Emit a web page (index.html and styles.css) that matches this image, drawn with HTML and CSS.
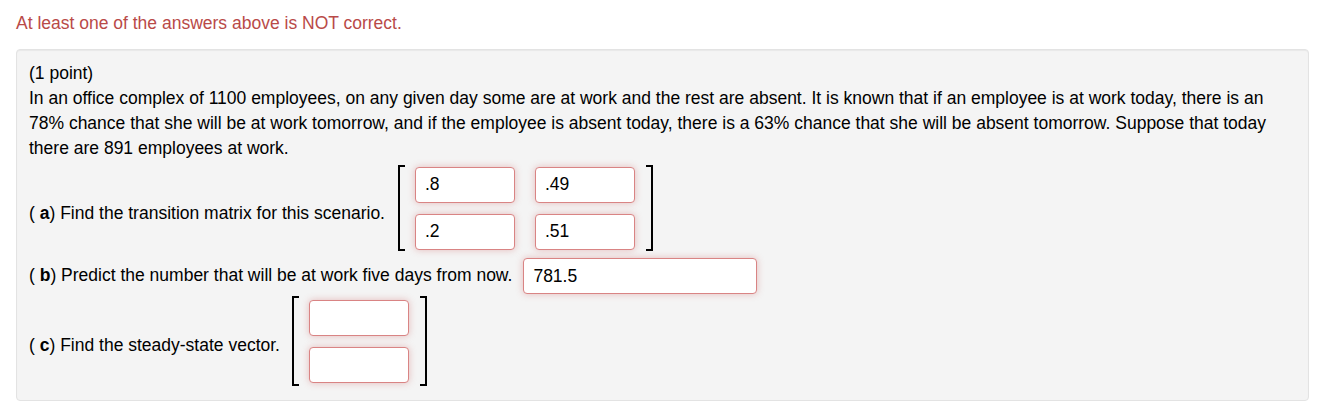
FILE: index.html
```html
<!DOCTYPE html>
<html>
<head>
<meta charset="utf-8">
<link rel="stylesheet" href="styles.css">
</head>
<body>
<div class="page">
  <div class="message">At least one of the answers above is NOT correct.</div>
  <div class="problem">
    <div class="points">(1 point)</div>
    <p class="statement">In an office complex of 1100 employees, on any given day some are at work and the rest are absent. It is known that if an employee is at work today, there is an 78% chance that she will be at work tomorrow, and if the employee is absent today, there is a 63% chance that she will be absent tomorrow. Suppose that today there are 891 employees at work.</p>

    <div class="part part-a">
      <span class="label">( <b>a</b>) Find the transition matrix for this scenario.</span>
      <div class="matrix">
        <span class="bracket left"></span>
        <div class="cells two">
          <input class="answer incorrect" type="text" value=".8">
          <input class="answer incorrect" type="text" value=".49">
          <input class="answer incorrect" type="text" value=".2">
          <input class="answer incorrect" type="text" value=".51">
        </div>
        <span class="bracket right"></span>
      </div>
    </div>

    <div class="part part-b">
      <span class="label">( <b>b</b>) Predict the number that will be at work five days from now.</span>
      <input class="answer incorrect wide" type="text" value="781.5">
    </div>

    <div class="part part-c">
      <span class="label">( <b>c</b>) Find the steady-state vector.</span>
      <div class="matrix tall">
        <span class="bracket left"></span>
        <div class="cells one">
          <input class="answer incorrect" type="text" value="">
          <input class="answer incorrect" type="text" value="">
        </div>
        <span class="bracket right"></span>
      </div>
    </div>
  </div>
</div>
</body>
</html>
```

FILE: styles.css
```css
html, body {
  margin: 0;
  padding: 0;
  background: #ffffff;
}

body {
  font-family: "Liberation Sans", Arial, sans-serif;
  font-size: 17.5px;
  color: #000;
}

.page {
  padding: 11px 14px 0 16px;
}

.message {
  color: #b94a48;
  line-height: 25px;
  margin-bottom: 13px;
}

.problem {
  background: #f4f4f4;
  border: 1px solid #e3e3e3;
  border-radius: 4px;
  box-shadow: inset 0 1px 1px rgba(0, 0, 0, 0.05);
  padding: 11px 12px 14px 12px;
  line-height: 25px;
}

.points {
  line-height: 25px;
}

.statement {
  margin: 0;
  line-height: 25px;
}

.part {
  display: flex;
  align-items: center;
}

.part-a {
  margin-top: 4px;
}

.part-b {
  margin-top: 7px;
}

.part-c {
  margin-top: 2px;
}

.label b {
  font-weight: bold;
}

.part-a .label {
  margin-right: 13px;
  margin-top: 10px;
}

.part-b .label {
  margin-right: 11px;
  margin-top: -2px;
}

.part-c .label {
  margin-right: 12px;
  margin-top: 8px;
}

.matrix {
  display: flex;
  align-items: center;
}

.bracket {
  display: block;
  width: 7px;
  height: 86px;
  box-sizing: border-box;
  border-top: 2px solid #000;
  border-bottom: 2px solid #000;
}

.tall .bracket {
  height: 90px;
}

.bracket.left {
  border-left: 2px solid #000;
  margin-right: 10px;
}

.bracket.right {
  border-right: 2px solid #000;
  margin-left: 11px;
}

.tall .bracket.left {
  margin-right: 10px;
}

.tall .bracket.right {
  margin-left: 11px;
}

.cells {
  display: grid;
  row-gap: 11px;
}

.cells.two {
  grid-template-columns: 100px 100px;
  column-gap: 20px;
}

.cells.one {
  grid-template-columns: 100px;
}

.answer {
  box-sizing: border-box;
  width: 100px;
  height: 36px;
  margin: 0;
  padding: 0 9px;
  font-family: "Liberation Sans", Arial, sans-serif;
  font-size: 17.5px;
  color: #000;
  background: #fff;
  border: 1px solid #d98484;
  border-radius: 4px;
  outline: none;
}

.answer.incorrect {
  box-shadow: 0 0 7px rgba(200, 80, 80, 0.35);
}

.answer.wide {
  width: 234px;
}
```
